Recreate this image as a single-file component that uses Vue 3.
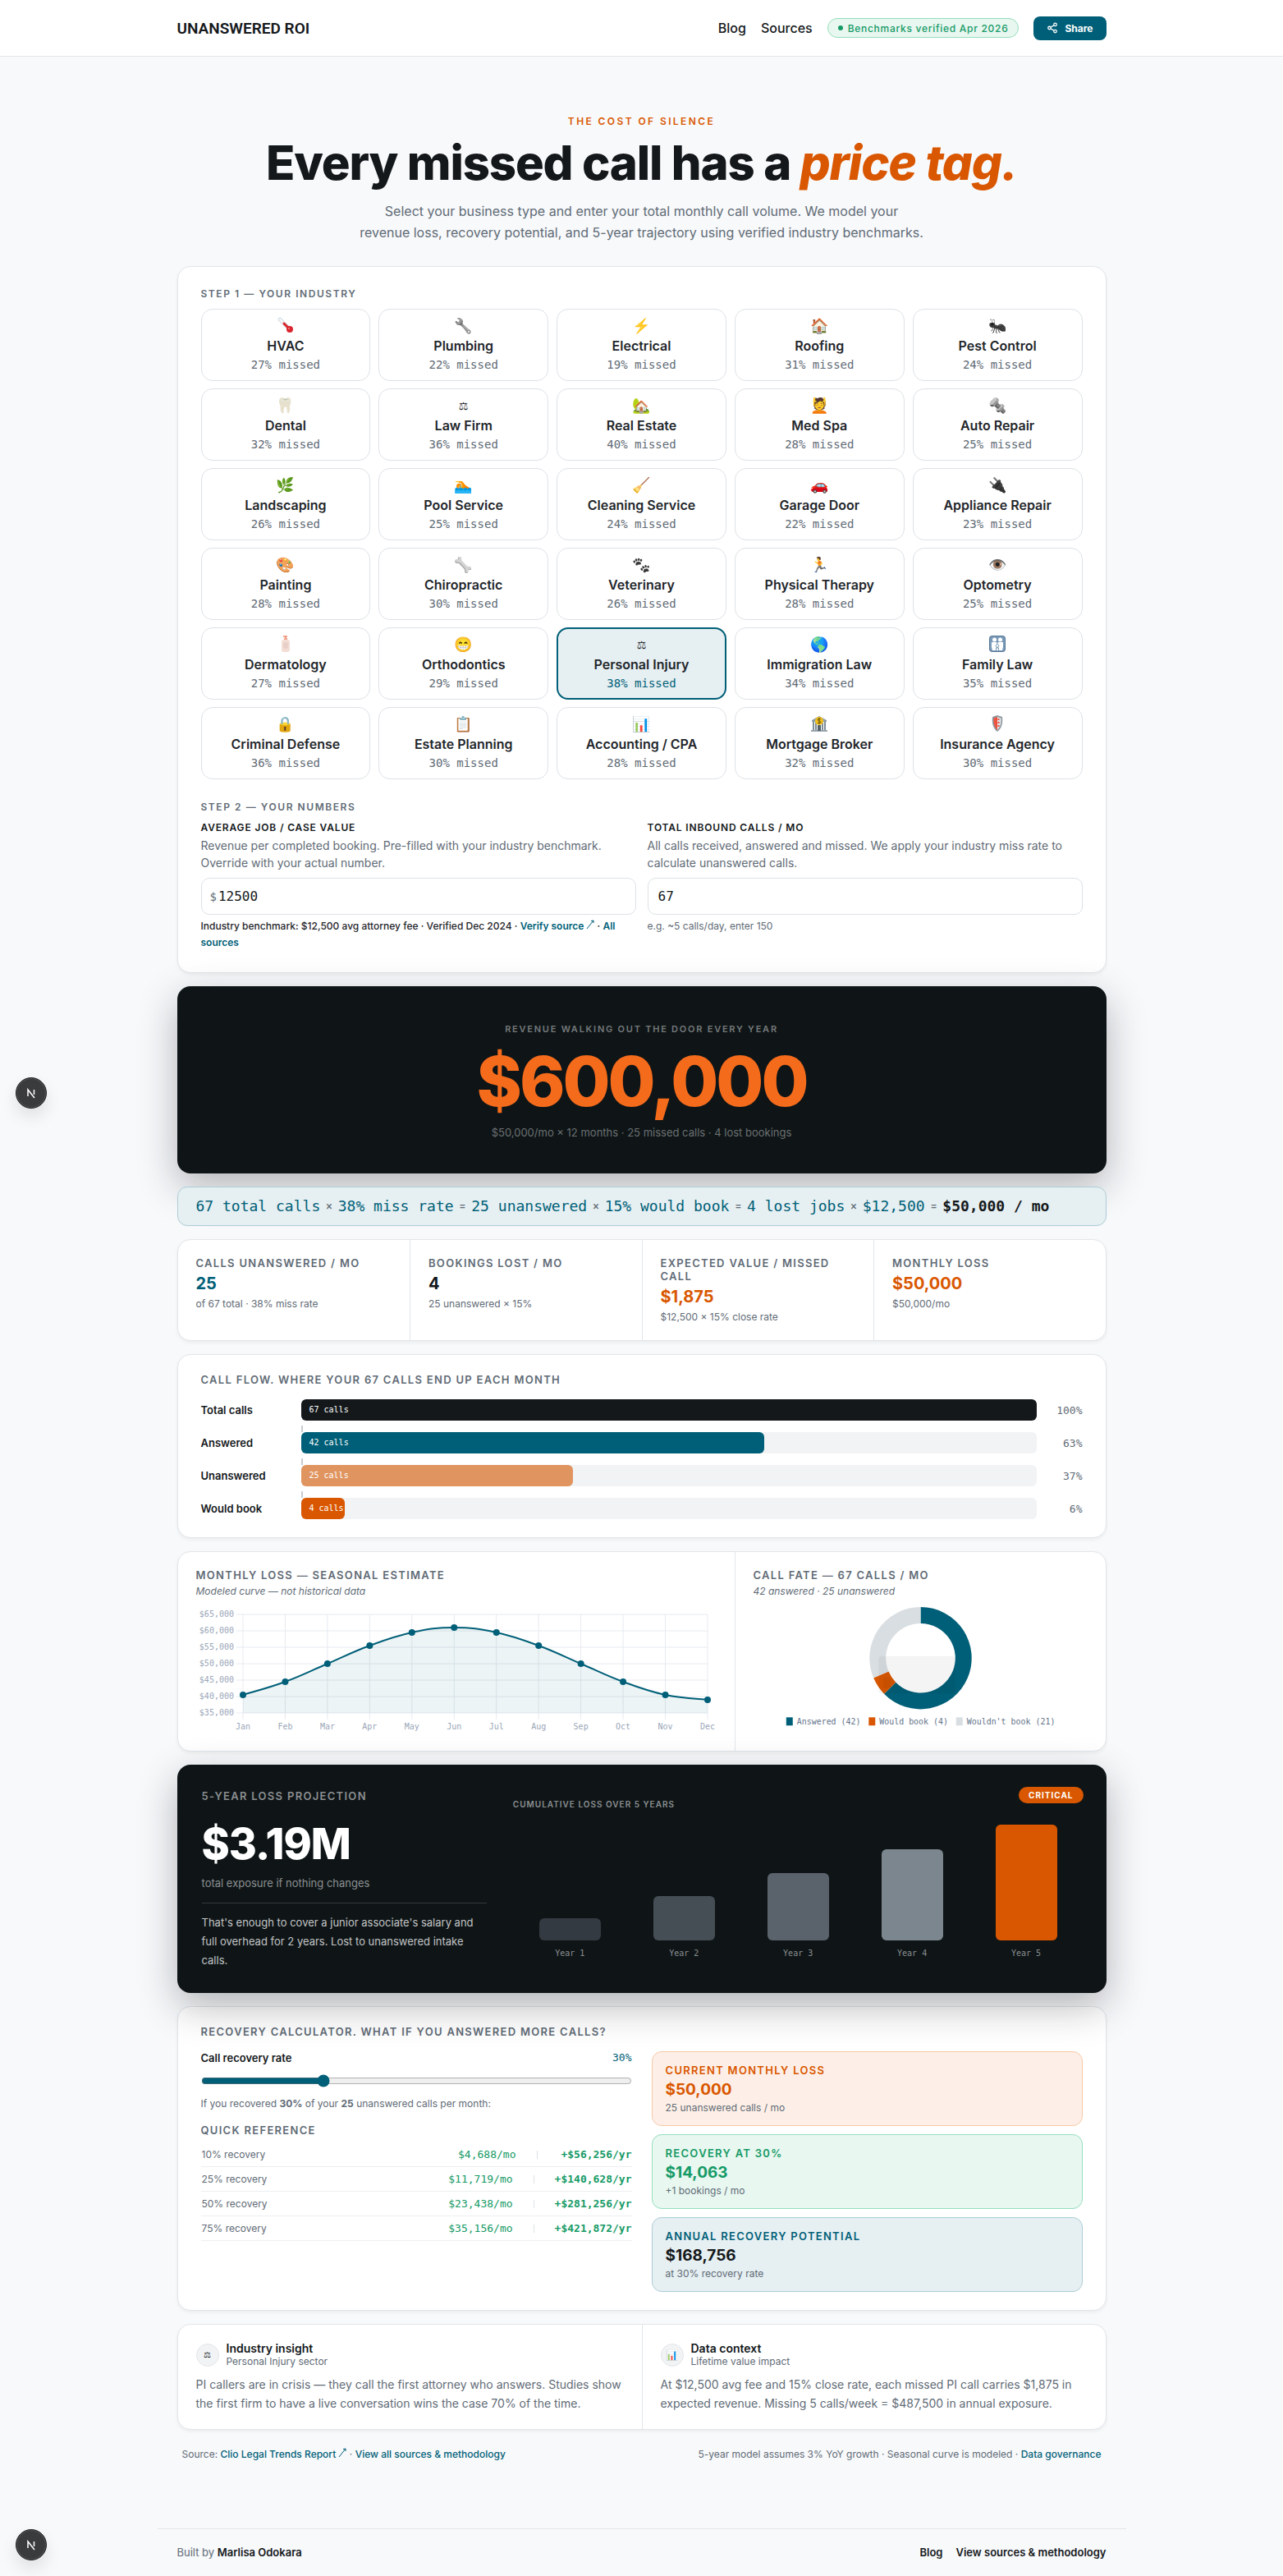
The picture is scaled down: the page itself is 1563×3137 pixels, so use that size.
<template>
  <div class="page">
    <header class="topbar">
      <div class="topbar-inner">
        <a href="#" class="brand">UNANSWERED ROI</a>
        <nav class="nav">
          <a href="#blog">Blog</a>
          <a href="#sources">Sources</a>
          <span class="verified"><i class="dot"></i>Benchmarks verified Apr 2026</span>
          <button type="button" class="share-btn">
            <svg width="14" height="14" viewBox="0 0 24 24" fill="none" stroke="currentColor" stroke-width="2.2">
              <circle cx="18" cy="5" r="3" />
              <circle cx="6" cy="12" r="3" />
              <circle cx="18" cy="19" r="3" />
              <path d="M8.6 13.5l6.8 4M15.4 6.5l-6.8 4" />
            </svg>
            Share
          </button>
        </nav>
      </div>
    </header>

    <main class="container">
      <section class="hero">
        <p class="hero-eyebrow">THE COST OF SILENCE</p>
        <h1>Every missed call has a <em>price tag.</em></h1>
        <p class="hero-sub">
          Select your business type and enter your total monthly call volume. We model your<br />
          revenue loss, recovery potential, and 5-year trajectory using verified industry benchmarks.
        </p>
      </section>

      <section class="card setup">
        <h2 class="step">STEP 1 — YOUR INDUSTRY</h2>
        <div class="industries">
          <button
            v-for="item in industries"
            :key="item.name"
            type="button"
            class="industry"
            :class="{ active: item.name === selected }"
            @click="selected = item.name"
          >
            <span class="emoji" :class="item.look">
              <svg v-if="item.icon === 'thermometer'" viewBox="0 0 20 20">
                <path d="M3 3L14 14" stroke="#c9d3da" stroke-width="4.5" stroke-linecap="round" />
                <path d="M3 3L14 14" stroke="#f4f7f9" stroke-width="3" stroke-linecap="round" />
                <path d="M8 8L14 14" stroke="#d9262e" stroke-width="3" stroke-linecap="round" />
                <circle cx="15" cy="15" r="4" fill="#d9262e" />
                <circle cx="14" cy="14" r="1" fill="#f58a8e" />
              </svg>
              <svg v-else-if="item.icon === 'lotion'" viewBox="0 0 20 20">
                <path d="M10 5V1h-3M10 1h2" fill="none" stroke="#f0876c" stroke-width="1.5" />
                <rect x="8" y="3" width="4" height="3" fill="#f3a08a" />
                <rect x="5" y="5" width="10" height="15" rx="3" fill="#f3ddd5" />
                <rect x="7" y="8" width="6" height="8" rx="3" fill="#e8cfc8" />
              </svg>
              <svg v-else-if="item.icon === 'family'" viewBox="0 0 20 20">
                <rect width="20" height="20" rx="4" fill="#56789a" />
                <rect x="1" y="1" width="18" height="18" rx="3" fill="#7b9ab8" />
                <g fill="#fff">
                  <circle cx="6.500" cy="5" r="2.500" />
                  <circle cx="13.500" cy="5" r="2.500" />
                  <path d="M3 8h6l1 3-2 7H4L3 14zM11 8h6v6l-1 4h-4l-2-7z" />
                </g>
                <circle cx="10" cy="12.500" r="1.800" fill="#fff" stroke="#7b9ab8" />
                <path d="M8.500 18v-3h3v3" fill="#fff" stroke="#7b9ab8" />
              </svg>
              <svg v-else-if="item.icon === 'bank'" viewBox="0 0 20 20">
                <path d="M1 6L10 1l9 5v2H1z" fill="#8f9da6" />
                <path d="M3 8v10M6 8v10M14 8v10M17 8v10" stroke="#7f8d96" stroke-width="2" />
                <path d="M0 19h20" stroke="#9aa6ad" stroke-width="2" />
                <rect x="8" y="12" width="4" height="7" fill="#54626a" />
                <circle cx="10" cy="7" r="5" fill="#f2c21f" />
                <path d="M12 5c-1-1-4-1-4 .500s4 1.500 4 3-3 1.500-4 .500M10 3v8" fill="none" stroke="#6b5208" />
              </svg>
              <svg v-else-if="item.icon === 'shield'" viewBox="0 0 20 20">
                <path d="M10 0l6 2c1 8-1 14-6 18C5 16 3 10 4 2z" fill="#8e989f" />
                <path d="M10 2L5.500 3.500C5 9 6 14 10 18z" fill="#ee5340" />
                <path d="M10 2l4.500 1.500C15 9 14 14 10 18z" fill="#dfe4e8" />
                <path d="M11.500 4v11" stroke="#ee5340" stroke-width="2" stroke-dasharray="2 2" />
              </svg>
              <template v-else>{{ item.icon }}</template>
            </span>
            <span class="industry-name">{{ item.name }}</span>
            <span class="industry-rate">{{ item.rate }}% missed</span>
          </button>
        </div>

        <h2 class="step step-two">STEP 2 — YOUR NUMBERS</h2>
        <div class="fields">
          <div class="field">
            <label for="job-value">AVERAGE JOB / CASE VALUE</label>
            <p class="hint">Revenue per completed booking. Pre-filled with your industry benchmark. Override with your actual number.</p>
            <div class="input-box">
              <span class="prefix">$</span>
              <input id="job-value" v-model="jobValue" type="text" inputmode="numeric" />
            </div>
            <p class="note dark">
              Industry benchmark: $12,500 avg attorney fee · Verified Dec 2024 ·
              <a href="#verify">Verify source <svg class="arrow" viewBox="0 0 10 12"><path d="M1 11L9 1M6 1.500L9 1L9 4" /></svg></a> ·
              <a href="#all">All sources</a>
            </p>
          </div>
          <div class="field">
            <label for="call-count">TOTAL INBOUND CALLS / MO</label>
            <p class="hint">All calls received, answered and missed. We apply your industry miss rate to calculate unanswered calls.</p>
            <div class="input-box wide">
              <input id="call-count" v-model="callCount" type="text" inputmode="numeric" />
            </div>
            <p class="note">e.g. ~5 calls/day, enter 150</p>
          </div>
        </div>
      </section>

      <section class="loss">
        <p class="loss-eyebrow">REVENUE WALKING OUT THE DOOR EVERY YEAR</p>
        <p class="loss-value">$600,000</p>
        <p class="loss-sub">$50,000/mo × 12 months · 25 missed calls · 4 lost bookings</p>
      </section>

      <section class="formula">
        <template v-for="(part, i) in formula" :key="i">
          <span class="term">{{ part[0] }}</span>
          <span class="op">{{ part[1] }}</span>
        </template>
        <strong>$50,000 / mo</strong>
      </section>

      <section class="card stats">
        <div v-for="stat in stats" :key="stat.label" class="stat">
          <h3 class="label">{{ stat.label }}</h3>
          <p class="stat-value" :class="stat.tone">{{ stat.value }}</p>
          <p class="small">{{ stat.sub }}</p>
        </div>
      </section>

      <section class="card panel">
        <h2 class="label">CALL FLOW. WHERE YOUR 67 CALLS END UP EACH MONTH</h2>
        <div class="flow">
          <template v-for="(row, i) in flow" :key="row.name">
            <div v-if="i > 0" class="connector"></div>
            <div class="flow-row">
              <span class="flow-name">{{ row.name }}</span>
              <div class="track">
                <div class="fill" :class="row.tone" :style="{ width: row.pct + '%' }">{{ row.calls }} calls</div>
              </div>
              <span class="flow-pct">{{ row.pct }}%</span>
            </div>
          </template>
        </div>
      </section>

      <section class="card charts">
        <div class="chart-cell">
          <h2 class="label">MONTHLY LOSS — SEASONAL ESTIMATE</h2>
          <p class="small italic">Modeled curve — not historical data</p>
          <svg class="chart" viewBox="0 0 634 156">
            <g v-for="t in yTicks" :key="t.label">
              <line :x1="plot.left - 8" :x2="plot.right" :y1="t.y" :y2="t.y" class="grid" />
              <text :x="plot.left - 11" :y="t.y + 3" class="tick" text-anchor="end">{{ t.label }}</text>
            </g>
            <g v-for="p in points" :key="p.month">
              <line :x1="p.x" :x2="p.x" :y1="plot.top" :y2="plot.bottom + 8" class="grid" />
              <text :x="p.x" y="150" class="tick" text-anchor="middle">{{ p.month }}</text>
            </g>
            <path :d="areaPath" class="area" />
            <path :d="linePath" class="line" />
            <circle v-for="p in points" :key="p.month" :cx="p.x" :cy="p.y" r="4" class="point" />
          </svg>
        </div>
        <div class="chart-cell">
          <h2 class="label">CALL FATE — 67 CALLS / MO</h2>
          <p class="small italic">42 answered · 25 unanswered</p>
          <svg class="chart" viewBox="0 0 409 156">
            <path v-for="s in slices" :key="s.label" :d="s.d" :fill="s.color" />
            <rect x="153" y="61" width="94" height="46" rx="4" class="ghost" />
            <rect x="159" y="88" width="9" height="12" class="ghost" />
            <g v-for="s in slices" :key="s.label">
              <rect :x="s.legendX" y="136" width="8" height="10" :fill="s.color" />
              <text :x="s.legendX + 13" y="145" class="legend">{{ s.label }}</text>
            </g>
          </svg>
        </div>
      </section>

      <section class="projection">
        <span class="badge">CRITICAL</span>
        <div>
          <h2 class="label muted">5-YEAR LOSS PROJECTION</h2>
          <p class="projection-value">$3.19M</p>
          <p class="projection-sub">total exposure if nothing changes</p>
          <p class="projection-text">That's enough to cover a junior associate's salary and full overhead for 2 years. Lost to unanswered intake calls.</p>
        </div>
        <div>
          <h3 class="bars-title">CUMULATIVE LOSS OVER 5 YEARS</h3>
          <div class="bars">
            <div v-for="(h, i) in years" :key="i" class="bar" :class="'bar-' + (i + 1)" :style="{ height: h + '%' }"></div>
          </div>
          <div class="bar-labels">
            <span v-for="n in 5" :key="n">Year {{ n }}</span>
          </div>
        </div>
      </section>

      <section class="card panel">
        <h2 class="label">RECOVERY CALCULATOR. WHAT IF YOU ANSWERED MORE CALLS?</h2>
        <div class="recovery">
          <div>
            <div class="slider-head">
              <label for="rate">Call recovery rate</label>
              <output for="rate">{{ rate }}%</output>
            </div>
            <input id="rate" v-model="rate" class="slider" type="range" min="5" max="95" />
            <p class="recovered">If you recovered <b>{{ rate }}%</b> of your <b>25</b> unanswered calls per month:</p>
            <h3 class="label">QUICK REFERENCE</h3>
            <table class="reference">
              <tbody>
                <tr v-for="row in reference" :key="row[0]">
                  <th scope="row">{{ row[0] }} recovery</th>
                  <td>{{ row[1] }}/mo</td>
                  <td class="sep"></td>
                  <td class="yearly">+{{ row[2] }}/yr</td>
                </tr>
              </tbody>
            </table>
          </div>
          <div class="outcomes">
            <div class="outcome orange">
              <h3 class="label">CURRENT MONTHLY LOSS</h3>
              <p class="outcome-value">$50,000</p>
              <p class="small">25 unanswered calls / mo</p>
            </div>
            <div class="outcome green">
              <h3 class="label">RECOVERY AT {{ rate }}%</h3>
              <p class="outcome-value">$14,063</p>
              <p class="small">+1 bookings / mo</p>
            </div>
            <div class="outcome teal">
              <h3 class="label">ANNUAL RECOVERY POTENTIAL</h3>
              <p class="outcome-value">$168,756</p>
              <p class="small">at {{ rate }}% recovery rate</p>
            </div>
          </div>
        </div>
      </section>

      <section class="card insights">
        <article v-for="note in insights" :key="note.title" class="insight">
          <div class="insight-head">
            <span class="insight-icon" :class="note.look">{{ note.icon }}</span>
            <div>
              <h3>{{ note.title }}</h3>
              <p class="small">{{ note.sub }}</p>
            </div>
          </div>
          <p class="insight-text">{{ note.text }}</p>
        </article>
      </section>

      <div class="sources">
        <p>
          Source: <a href="#clio">Clio Legal Trends Report <svg class="arrow" viewBox="0 0 10 12"><path d="M1 11L9 1M6 1.500L9 1L9 4" /></svg></a> ·
          <a href="#methodology">View all sources &amp; methodology</a>
        </p>
        <p>5-year model assumes 3% YoY growth · Seasonal curve is modeled · <a href="#governance">Data governance</a></p>
      </div>
    </main>

    <footer class="footer">
      <p>Built by <a href="#author">Marlisa Odokara</a></p>
      <nav>
        <a href="#blog">Blog</a>
        <a href="#methodology">View sources &amp; methodology</a>
      </nav>
    </footer>

    <button v-for="spot in ['middle', 'bottom']" :key="spot" type="button" class="dev-badge" :class="spot" aria-label="Dev tools">
      <svg width="18" height="18" viewBox="0 0 18 18" fill="none" stroke="#fff" stroke-width="1.5">
        <path d="M5 13V5l8 10" />
        <path d="M12.500 5v6" />
      </svg>
    </button>
  </div>
</template>

<script setup>
import { ref } from 'vue'

const selected = ref('Personal Injury')
const jobValue = ref('12500')
const callCount = ref('67')
const rate = ref(30)

const industries = [
  { icon: 'thermometer', name: 'HVAC', rate: 27 },
  { icon: '🔧', name: 'Plumbing', rate: 22, look: 'gray' },
  { icon: '⚡', name: 'Electrical', rate: 19 },
  { icon: '🏠', name: 'Roofing', rate: 31 },
  { icon: '🐜', name: 'Pest Control', rate: 24, look: 'dark' },
  { icon: '🦷', name: 'Dental', rate: 32, look: 'beige' },
  { icon: '⚖', name: 'Law Firm', rate: 36, look: 'glyph' },
  { icon: '🏡', name: 'Real Estate', rate: 40 },
  { icon: '💆', name: 'Med Spa', rate: 28 },
  { icon: '🔩', name: 'Auto Repair', rate: 25, look: 'gray' },
  { icon: '🌿', name: 'Landscaping', rate: 26 },
  { icon: '🏊', name: 'Pool Service', rate: 25 },
  { icon: '🧹', name: 'Cleaning Service', rate: 24 },
  { icon: '🚗', name: 'Garage Door', rate: 22 },
  { icon: '🔌', name: 'Appliance Repair', rate: 23, look: 'dark' },
  { icon: '🎨', name: 'Painting', rate: 28 },
  { icon: '🦴', name: 'Chiropractic', rate: 30, look: 'gray' },
  { icon: '🐾', name: 'Veterinary', rate: 26, look: 'dark' },
  { icon: '🏃', name: 'Physical Therapy', rate: 28 },
  { icon: '👁️', name: 'Optometry', rate: 25 },
  { icon: 'lotion', name: 'Dermatology', rate: 27 },
  { icon: '😁', name: 'Orthodontics', rate: 29 },
  { icon: '⚖', name: 'Personal Injury', rate: 38, look: 'glyph' },
  { icon: '🌎', name: 'Immigration Law', rate: 34 },
  { icon: 'family', name: 'Family Law', rate: 35 },
  { icon: '🔒', name: 'Criminal Defense', rate: 36 },
  { icon: '📋', name: 'Estate Planning', rate: 30 },
  { icon: '📊', name: 'Accounting / CPA', rate: 28 },
  { icon: 'bank', name: 'Mortgage Broker', rate: 32 },
  { icon: 'shield', name: 'Insurance Agency', rate: 30 }
]

const formula = [
  ['67 total calls', '×'],
  ['38% miss rate', '='],
  ['25 unanswered', '×'],
  ['15% would book', '='],
  ['4 lost jobs', '×'],
  ['$12,500', '=']
]

const stats = [
  { label: 'CALLS UNANSWERED / MO', value: '25', sub: 'of 67 total · 38% miss rate', tone: 'teal' },
  { label: 'BOOKINGS LOST / MO', value: '4', sub: '25 unanswered × 15%', tone: '' },
  { label: 'EXPECTED VALUE / MISSED CALL', value: '$1,875', sub: '$12,500 × 15% close rate', tone: 'orange' },
  { label: 'MONTHLY LOSS', value: '$50,000', sub: '$50,000/mo', tone: 'orange' }
]

const flow = [
  { name: 'Total calls', calls: 67, pct: 100, tone: 'ink' },
  { name: 'Answered', calls: 42, pct: 63, tone: 'teal' },
  { name: 'Unanswered', calls: 25, pct: 37, tone: 'peach' },
  { name: 'Would book', calls: 4, pct: 6, tone: 'orange' }
]

const years = [19, 38, 58, 79, 100]

const reference = [
  ['10%', '$4,688', '$56,256'],
  ['25%', '$11,719', '$140,628'],
  ['50%', '$23,438', '$281,256'],
  ['75%', '$35,156', '$421,872']
]

const insights = [
  {
    icon: '⚖',
    look: 'glyph',
    title: 'Industry insight',
    sub: 'Personal Injury sector',
    text: 'PI callers are in crisis — they call the first attorney who answers. Studies show the first firm to have a live conversation wins the case 70% of the time.'
  },
  {
    icon: '📊',
    title: 'Data context',
    sub: 'Lifetime value impact',
    text: 'At $12,500 avg fee and 15% close rate, each missed PI call carries $1,875 in expected revenue. Missing 5 calls/week = $487,500 in annual exposure.'
  }
]

// seasonal line chart
const plot = { left: 57, right: 623, top: 10, bottom: 130 }
const months = ['Jan', 'Feb', 'Mar', 'Apr', 'May', 'Jun', 'Jul', 'Aug', 'Sep', 'Oct', 'Nov', 'Dec']
const losses = [40500, 44500, 50000, 55500, 59500, 61000, 59500, 55500, 50000, 44500, 40500, 39000]
const yFor = (v) => plot.bottom - ((v - 35000) / 30000) * (plot.bottom - plot.top)

const yTicks = [65, 60, 55, 50, 45, 40, 35].map((k) => ({ label: `$${k},000`, y: yFor(k * 1000) }))
const points = losses.map((v, i) => ({
  month: months[i],
  x: plot.left + (i * (plot.right - plot.left)) / 11,
  y: yFor(v)
}))

const slope = (i) => {
  const a = points[Math.max(i - 1, 0)]
  const b = points[Math.min(i + 1, points.length - 1)]
  return { x: (b.x - a.x) * 0.2, y: (b.y - a.y) * 0.2 }
}

const linePath = points.reduce((d, p, i) => {
  if (i === 0) return `M${p.x} ${p.y}`
  const prev = points[i - 1]
  const s = slope(i - 1)
  const e = slope(i)
  return `${d} C${prev.x + s.x} ${prev.y + s.y} ${p.x - e.x} ${p.y - e.y} ${p.x} ${p.y}`
}, '')
const areaPath = `${linePath} L${plot.right} ${plot.bottom} L${plot.left} ${plot.bottom} Z`

// call fate doughnut
const ring = (from, to) => {
  const at = (t, r) => {
    const a = (t / 67) * Math.PI * 2
    return `${204.5 + r * Math.sin(a)} ${63.5 - r * Math.cos(a)}`
  }
  const big = to - from > 33.5 ? 1 : 0
  return `M${at(from, 62.5)} A62.5 62.5 0 ${big} 1 ${at(to, 62.5)} L${at(to, 42.5)} A42.5 42.5 0 ${big} 0 ${at(from, 42.5)} Z`
}
const slices = [
  { label: 'Answered (42)', color: '#005f78', d: ring(0, 42), legendX: 40 },
  { label: 'Would book (4)', color: '#d95700', d: ring(42, 46), legendX: 141 },
  { label: "Wouldn't book (21)", color: '#d9dee2', d: ring(46, 67), legendX: 248 }
]
</script>

<style>
body {
  background: #f8f9fb;
}
</style>

<style scoped>
.page {
  --ink: #14181b;
  --gray: #5f6b76;
  --teal: #005f78;
  --orange: #d95700;
  --green: #159a66;
  --line: #e2e6ea;
  --mono: "DejaVu Sans Mono", "Liberation Mono", monospace;
  position: relative;
  font-family: Inter, "Noto Sans", sans-serif;
  color: var(--ink);
  background: #f8f9fb;
}

.page * {
  box-sizing: border-box;
}

h1, h2, h3, p {
  margin: 0;
}

a {
  color: inherit;
  text-decoration: none;
}

button, input {
  font-family: inherit;
}

/* header */
.topbar {
  background: #fff;
  border-bottom: 1px solid var(--line);
}

.topbar-inner {
  display: flex;
  align-items: center;
  justify-content: space-between;
  max-width: 1180px;
  height: 68px;
  margin: 0 auto;
  padding: 0 24px;
}

.brand {
  font-family: Roboto, sans-serif;
  font-size: 19px;
  font-weight: 600;
}

.nav {
  display: flex;
  align-items: center;
  gap: 18px;
  font-size: 16px;
  font-weight: 500;
}

.verified {
  display: flex;
  align-items: center;
  gap: 6px;
  height: 24px;
  padding: 0 12px;
  border: 1px solid #93dfbc;
  border-radius: 12px;
  background: #e8f7f0;
  color: var(--green);
  font-size: 12px;
  letter-spacing: 0.06em;
}

.dot {
  width: 6px;
  height: 6px;
  border-radius: 50%;
  background: var(--green);
}

.share-btn {
  display: flex;
  align-items: center;
  gap: 8px;
  height: 29px;
  padding: 0 16px;
  border: 0;
  border-radius: 8px;
  background: var(--teal);
  color: #fff;
  font-size: 12px;
  font-weight: 700;
}

/* hero */
.container {
  max-width: 1180px;
  margin: 0 auto;
  padding: 0 24px;
}

.hero {
  padding: 71px 0 28px;
  text-align: center;
}

.hero-eyebrow {
  color: var(--orange);
  font-size: 12px;
  font-weight: 600;
  line-height: 16px;
  letter-spacing: 0.2em;
}

.hero h1 {
  margin-top: 11px;
  margin-bottom: 15px;
  font-size: 58px;
  font-weight: 800;
  line-height: 62px;
  letter-spacing: -0.02em;
}

.hero h1 em {
  color: var(--orange);
}

.hero-sub {
  color: var(--gray);
  font-size: 16px;
  line-height: 26px;
}

/* cards */
.card {
  margin-bottom: 16px;
  border: 1px solid var(--line);
  border-radius: 16px;
  background: #fff;
  box-shadow: 0 2px 4px rgba(20, 30, 40, 0.06);
}

.panel {
  padding: 22px 28px;
}

.label {
  color: var(--gray);
  font-size: 13px;
  font-weight: 600;
  line-height: 16px;
  letter-spacing: 0.1em;
}

.small {
  color: var(--gray);
  font-size: 12px;
  line-height: 16px;
}

.italic {
  margin-top: 4px;
  font-style: italic;
}

/* setup */
.setup {
  padding: 23px 28px 26px;
}

.step {
  color: var(--gray);
  font-size: 12px;
  font-weight: 600;
  line-height: 20px;
  letter-spacing: 0.13em;
}

.step-two {
  margin-top: 24px;
}

.industries {
  display: grid;
  grid-template-columns: repeat(5, 1fr);
  gap: 9px 10px;
  margin-top: 8px;
}

.industry {
  display: flex;
  flex-direction: column;
  align-items: center;
  justify-content: center;
  height: 88px;
  padding: 0 0 2px;
  border: 1px solid #dde2e6;
  border-radius: 14px;
  background: #fff;
  color: #1f262b;
}

.industry.active {
  border: 2px solid var(--teal);
  background: #e6eff2;
}

.emoji {
  height: 25px;
  font-family: "Noto Color Emoji", "DejaVu Sans", sans-serif;
  font-size: 18px;
  line-height: 25px;
}

.emoji svg {
  display: block;
  width: 20px;
  height: 20px;
  margin-top: 2px;
  fill: none;
}

.emoji.glyph, .insight-icon.glyph {
  font-family: "DejaVu Sans", sans-serif;
  font-size: 13px;
  line-height: 28px;
}

.emoji.gray {
  filter: grayscale(1) brightness(0.9);
}

.emoji.dark {
  filter: grayscale(1) brightness(0.6);
}

.emoji.beige {
  filter: sepia(0.4) brightness(0.9);
}

.industry-name {
  font-size: 16px;
  font-weight: 600;
  line-height: 24px;
}

.industry-rate {
  color: var(--gray);
  font-family: var(--mono);
  font-size: 14px;
  line-height: 22px;
}

.active .industry-rate {
  color: var(--teal);
}

.fields {
  display: grid;
  grid-template-columns: 1fr 1fr;
  gap: 14px;
  margin-top: 7px;
}

.field label {
  display: block;
  font-size: 12px;
  font-weight: 600;
  line-height: 16px;
  letter-spacing: 0.07em;
}

.hint {
  margin-top: 3px;
  color: var(--gray);
  font-size: 14px;
  line-height: 21px;
}

.input-box {
  display: flex;
  align-items: center;
  height: 45px;
  margin-top: 8px;
  padding: 0 10px;
  border: 1px solid #dde2e6;
  border-radius: 10px;
  background: #fff;
}

.input-box.wide {
  padding: 0 12px;
}

.prefix {
  margin-right: 2px;
  color: var(--gray);
  font-family: var(--mono);
  font-size: 14px;
}

.input-box input {
  flex: 1;
  min-width: 0;
  padding: 0;
  border: 0;
  outline: 0;
  background: transparent;
  color: var(--ink);
  font-family: var(--mono);
  font-size: 16px;
}

.note {
  margin-top: 4px;
  color: var(--gray);
  font-size: 12px;
  line-height: 20px;
}

.note.dark {
  color: #1f262b;
  font-weight: 500;
}

.note a, .sources a {
  color: var(--teal);
  font-weight: 500;
}

.note a {
  font-weight: 600;
}

.arrow {
  width: 10px;
  height: 12px;
  fill: none;
  stroke: currentColor;
}

/* yearly loss */
.loss, .projection {
  border-radius: 16px;
  background: #0f1517;
  box-shadow: 0 16px 48px rgba(20, 20, 26, 0.3);
}

.loss {
  margin-bottom: 16px;
  padding: 44px 24px 40px;
  text-align: center;
}

.loss-eyebrow {
  color: #75797b;
  font-size: 11px;
  font-weight: 600;
  line-height: 16px;
  letter-spacing: 0.16em;
}

.loss-value {
  margin-top: 12px;
  color: #f56b1c;
  font-size: 84px;
  font-weight: 800;
  line-height: 88px;
  letter-spacing: -3px;
}

.loss-sub {
  margin-top: 8px;
  color: #6b7072;
  font-size: 13px;
  line-height: 20px;
}

.formula {
  position: relative;
  display: flex;
  flex-wrap: wrap;
  align-items: center;
  gap: 7px;
  margin-bottom: 16px;
  padding: 12px 22px;
  border: 1px solid #adcdd6;
  border-radius: 12px;
  background: #e6eff2;
  font-family: var(--mono);
  font-size: 18px;
  line-height: 22px;
}

.term {
  color: var(--teal);
}

.op {
  color: var(--gray);
  font-family: Roboto, sans-serif;
  font-size: 14px;
}

/* stats */
.stats {
  display: grid;
  grid-template-columns: repeat(4, 1fr);
}

.stat {
  padding: 20px 22px;
}

.stat + .stat, .chart-cell + .chart-cell, .insight + .insight {
  border-left: 1px solid var(--line);
}

.stat-value {
  margin: 4px 0;
  font-size: 20px;
  font-weight: 700;
  line-height: 26px;
}

.stat-value.teal {
  color: var(--teal);
}

.stat-value.orange {
  color: var(--orange);
}

/* call flow */
.flow {
  margin-top: 16px;
}

.flow-row {
  display: flex;
  align-items: center;
  gap: 12px;
}

.flow-name {
  width: 110px;
  font-size: 13px;
  font-weight: 600;
}

.track {
  flex: 1;
  height: 26px;
  border-radius: 6px;
  background: #f2f3f5;
}

.fill {
  height: 26px;
  padding-left: 10px;
  border-radius: 6px;
  color: #fff;
  font-family: var(--mono);
  font-size: 10px;
  line-height: 26px;
  white-space: nowrap;
}

.fill.ink {
  background: #14181b;
}

.fill.teal {
  background: var(--teal);
}

.fill.peach {
  background: #e09460;
}

.fill.orange {
  background: var(--orange);
}

.flow-pct {
  width: 44px;
  color: var(--gray);
  font-family: var(--mono);
  font-size: 13px;
  text-align: right;
}

.connector {
  width: 2px;
  height: 8px;
  margin: 6px 0 0 122px;
  background: #c8cdd1;
}

/* charts */
.charts {
  display: grid;
  grid-template-columns: 3fr 2fr;
}

.chart-cell {
  padding: 20px 22px;
}

.chart {
  display: block;
  width: 100%;
  height: auto;
  margin-top: 10px;
}

.grid {
  stroke: #e6eaf0;
}

.tick, .legend {
  fill: #9aa6b8;
  font-family: var(--mono);
  font-size: 10px;
}

.legend {
  fill: #64748b;
}

.area {
  fill: rgba(0, 95, 120, 0.07);
}

.line {
  fill: none;
  stroke: #005f78;
  stroke-width: 2;
}

.point {
  fill: #005f78;
}

.ghost {
  fill: rgba(0, 0, 0, 0.045);
}

/* projection */
.projection {
  position: relative;
  z-index: 1;
  display: grid;
  grid-template-columns: 1fr 2fr;
  gap: 32px;
  margin-bottom: 16px;
  padding: 30px 28px 28px 30px;
}

.badge {
  position: absolute;
  top: 27px;
  right: 28px;
  padding: 0 12px;
  border-radius: 10px;
  background: var(--orange);
  color: #fff;
  font-size: 10px;
  font-weight: 700;
  line-height: 20px;
  letter-spacing: 0.1em;
}

.label.muted {
  color: #8b8f91;
}

.projection-value {
  margin-top: 24px;
  color: #fff;
  font-size: 52px;
  font-weight: 800;
  line-height: 54px;
  letter-spacing: -1px;
}

.projection-sub {
  margin-top: 10px;
  color: #8b8f91;
  font-size: 13px;
  line-height: 20px;
}

.projection-text {
  margin-top: 14px;
  padding-top: 12px;
  border-top: 1px solid #33383a;
  color: #c3c5c6;
  font-size: 13px;
  line-height: 23px;
}

.bars-title {
  margin-top: 10px;
  color: #8b8f91;
  font-size: 10px;
  font-weight: 600;
  line-height: 16px;
  letter-spacing: 0.1em;
}

.bars, .bar-labels {
  display: grid;
  grid-template-columns: repeat(5, 1fr);
  justify-items: center;
}

.bars {
  align-items: end;
  height: 141px;
  margin-top: 17px;
}

.bar {
  width: 54%;
  border-radius: 6px;
}

.bar-1 { background: #343a41; }
.bar-2 { background: #464e55; }
.bar-3 { background: #5a626c; }
.bar-4 { background: #7b868e; }
.bar-5 { background: #d95700; }

.bar-labels {
  margin-top: 8px;
  color: #8b8f91;
  font-family: var(--mono);
  font-size: 10px;
  line-height: 16px;
}

/* recovery */
.recovery {
  display: grid;
  grid-template-columns: 1fr 1fr;
  gap: 24px;
  margin-top: 16px;
}

.slider-head {
  display: flex;
  justify-content: space-between;
  font-size: 13px;
  font-weight: 600;
  line-height: 16px;
}

.slider-head output {
  color: var(--teal);
  font-family: var(--mono);
  font-weight: 400;
}

.slider {
  display: block;
  width: 100%;
  height: 16px;
  margin: 12px 0 10px;
  accent-color: #005f78;
}

.recovered {
  margin-bottom: 14px;
  color: var(--gray);
  font-size: 12px;
  line-height: 20px;
}

.reference {
  display: block;
  margin-top: 7px;
  color: var(--green);
  font-family: var(--mono);
  font-size: 13px;
  line-height: 20px;
}

.reference tbody {
  display: block;
}

.reference tr {
  display: flex;
  align-items: center;
  gap: 25px;
  height: 30px;
  border-bottom: 1px solid #eceef0;
}

.reference th {
  flex: 1;
  color: var(--gray);
  font-family: Inter, sans-serif;
  font-size: 12px;
  font-weight: 400;
  text-align: left;
}

.reference td {
  padding: 0;
}

.reference .sep {
  width: 1px;
  height: 10px;
  background: #dde2e6;
}

.reference .yearly {
  min-width: 90px;
  font-weight: 700;
  text-align: right;
}

.outcomes {
  display: grid;
  gap: 10px;
}

.outcome {
  padding: 14px 16px 13px;
  border: 1px solid;
  border-radius: 12px;
}

.outcome-value {
  margin: 4px 0 2px;
  font-size: 19px;
  font-weight: 700;
  line-height: 24px;
}

.outcome.orange {
  border-color: #f7c9a6;
  background: #fdefe7;
}

.outcome.orange .label, .outcome.orange .outcome-value {
  color: var(--orange);
}

.outcome.green {
  border-color: #93dfbc;
  background: #e8f7f0;
}

.outcome.green .label, .outcome.green .outcome-value {
  color: var(--green);
}

.outcome.teal {
  border-color: #adcdd6;
  background: #e6eff2;
}

.outcome.teal .label {
  color: var(--teal);
}

/* insights */
.insights {
  display: grid;
  grid-template-columns: 1fr 1fr;
  margin-bottom: 20px;
}

.insight {
  padding: 20px 16px 20px 22px;
}

.insight-head {
  display: flex;
  align-items: center;
  gap: 9px;
}

.insight-icon {
  display: flex;
  align-items: center;
  justify-content: center;
  width: 28px;
  height: 28px;
  border: 1px solid var(--line);
  border-radius: 50%;
  background: #f2f3f5;
  font-family: "Noto Color Emoji", "DejaVu Sans", sans-serif;
  font-size: 12px;
}

.insight-icon.glyph {
  font-size: 10px;
}

.insight h3 {
  font-size: 14px;
  font-weight: 600;
  line-height: 17px;
}

.insight-text {
  margin-top: 8px;
  color: var(--gray);
  font-size: 14px;
  line-height: 23px;
}

.sources {
  display: flex;
  justify-content: space-between;
  padding: 0 6px;
  color: var(--gray);
  font-size: 12px;
  line-height: 20px;
}

/* footer */
.footer {
  display: flex;
  justify-content: space-between;
  max-width: 1180px;
  margin: 80px auto 0;
  padding: 18px 24px 19px;
  border-top: 1px solid var(--line);
  color: var(--gray);
  font-size: 13px;
  line-height: 20px;
}

.footer nav {
  display: flex;
  gap: 16px;
}

.footer a {
  color: var(--ink);
  font-weight: 600;
}

.dev-badge {
  position: absolute;
  left: 19px;
  display: flex;
  align-items: center;
  justify-content: center;
  width: 38px;
  height: 38px;
  padding: 0;
  border: 1px solid #1c1d1e;
  border-radius: 50%;
  background: #3a3b3c;
  box-shadow: inset 0 0 0 1px #555, 0 10px 20px rgba(0, 0, 0, 0.1);
}

.dev-badge.middle {
  top: 1312px;
}

.dev-badge.bottom {
  bottom: 19px;
}
</style>
